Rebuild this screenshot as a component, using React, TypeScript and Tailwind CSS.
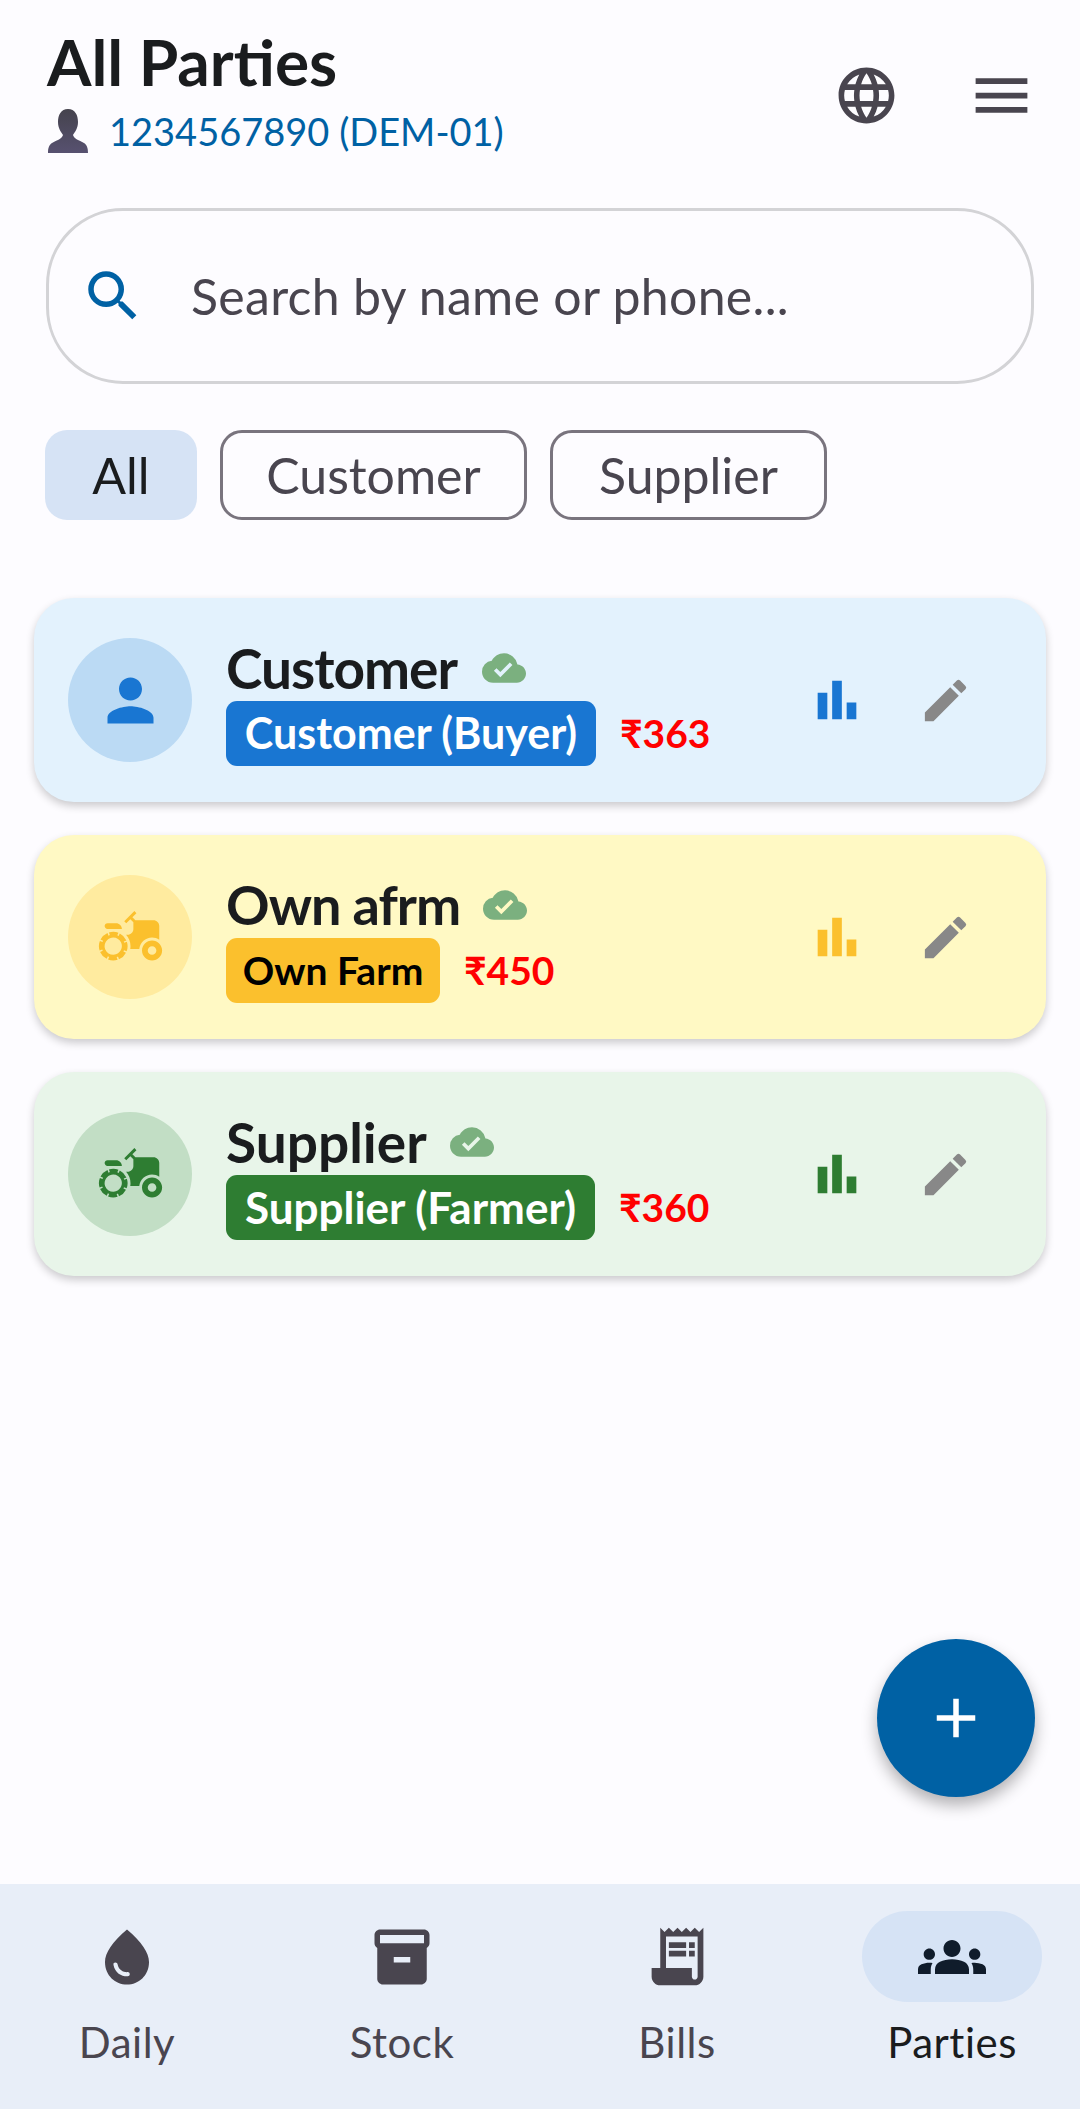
import {
  MdAdd, MdAgriculture, MdBarChart, MdCloudDone, MdEdit, MdGroups, MdInventory2,
  MdLanguage, MdMenu, MdPerson, MdReceiptLong, MdSearch, MdWaterDrop,
} from 'react-icons/md';

const parties = [
  {
    name: 'Customer', nameClass: 'text-[55px] tracking-[-1px]', cloudGap: 'ml-[25px]', badge: 'Customer (Buyer)', badgeClass: 'w-[370px] text-[43px]', amount: '₹363',
    card: 'bg-[#e3f2fd]', avatar: 'bg-[#bbdaf4]', tone: 'text-[#1976d2]', badgeBg: 'bg-[#1976d2] text-white', Icon: MdPerson,
  },
  {
    name: 'Own afrm', nameClass: 'text-[54px] tracking-[-1px]', cloudGap: 'ml-[23px]', badge: 'Own Farm', badgeClass: 'w-[214px] text-[39px]', amount: '₹450',
    card: 'bg-[#fff9c4]', avatar: 'bg-[#ffeb9f]', tone: 'text-[#fbc02d]', badgeBg: 'bg-[#fbc02d] text-black', Icon: MdAgriculture,
  },
  {
    name: 'Supplier', nameClass: 'text-[55px]', cloudGap: 'ml-[23px]', badge: 'Supplier (Farmer)', badgeClass: 'w-[369px] text-[44px]', amount: '₹360',
    card: 'bg-[#e8f5e9]', avatar: 'bg-[#c2dec5]', tone: 'text-[#2e7d32]', badgeBg: 'bg-[#2e7d32] text-white', Icon: MdAgriculture,
  },
];

const navItems = [
  { label: 'Daily', Icon: MdWaterDrop, size: 66 },
  { label: 'Stock', Icon: MdInventory2, size: 66 },
  { label: 'Bills', Icon: MdReceiptLong, size: 69 },
  { label: 'Parties', Icon: MdGroups, size: 68, active: true },
];

export default function App() {
  return (
    <div className="relative flex h-[2109px] w-[1080px] flex-col overflow-hidden bg-[#fdfcff] font-['Lato',sans-serif] text-[#1a1c1e]">
      <main className="flex-1">
        <header className="flex items-start justify-between pl-[47px] pr-[44px] pt-[30px]">
          <div>
            <h1 className="text-[64px] font-bold leading-[64px]">All Parties</h1>
            <div className="mt-[15px] flex items-center gap-[20px]">
              <svg width="42" height="44" viewBox="0 0 42 44" className="shrink-0">
                <defs>
                  <linearGradient id="bust" x1="0" y1="0" x2="0" y2="1">
                    <stop offset="0" stopColor="#45434d" />
                    <stop offset="1" stopColor="#575170" />
                  </linearGradient>
                </defs>
                <path d="M21 0c7 0 10 6 10 13 0 6-3 10-5 13 1 4 6 5 11 8 3 2 4 5 4 10H1c0-5 1-8 4-10 5-3 10-4 11-8-2-3-5-7-5-13C11 6 14 0 21 0z" fill="url(#bust)" />
              </svg>
              <span className="text-[38px] leading-[44px] text-[#0061a4]">1234567890 (DEM-01)</span>
            </div>
          </div>
          <div className="mt-[31px] flex items-center gap-[67px] text-[#49454f]">
            <MdLanguage size={67} />
            <MdMenu size={69} />
          </div>
        </header>

        <div className="mx-[46px] mt-[55px] flex h-[176px] items-center rounded-[77px] border-[3px] border-[#d3d3d6] pl-[31px]">
          <MdSearch size={66} className="shrink-0 text-[#0061a4]" />
          <span className="ml-[45px] text-[50px] tracking-[0.3px] text-[#49454f]">Search by name or phone...</span>
        </div>

        <div className="mx-[45px] mt-[46px] flex gap-[23px] text-[50px]">
          <div className="flex h-[90px] w-[152px] items-center justify-center rounded-[22px] bg-[#d6e3f5] text-[#1a1c1e]">All</div>
          <div className="flex h-[90px] w-[307px] items-center justify-center rounded-[22px] border-[3px] border-[#79747e] text-[#49454f]">Customer</div>
          <div className="flex h-[90px] w-[277px] items-center justify-center rounded-[22px] border-[3px] border-[#79747e] text-[#49454f]">Supplier</div>
        </div>

        <section className="mx-[34px] mt-[78px] flex flex-col gap-[33px]">
          {parties.map((p) => (
            <article key={p.name} className={`flex h-[204px] items-center rounded-[40px] pl-[34px] shadow-[0_4px_8px_rgba(0,0,0,0.2)] ${p.card}`}>
              <div className={`flex h-[124px] w-[124px] shrink-0 items-center justify-center rounded-full ${p.avatar} ${p.tone}`}>
                <p.Icon size={69} />
              </div>
              <div className="ml-[34px] w-[560px]">
                <div className="flex h-[66px] items-center">
                  <span className={`font-bold leading-[66px] ${p.nameClass}`}>{p.name}</span>
                  <MdCloudDone size={44} className={`${p.cloudGap} text-[#7bb07f]`} />
                </div>
                <div className="flex items-center">
                  <span className={`flex h-[65px] items-center justify-center rounded-[11px] font-bold ${p.badgeClass} ${p.badgeBg}`}>{p.badge}</span>
                  <span className="ml-[24px] text-[39px] font-bold text-[#ff0000]">{p.amount}</span>
                </div>
              </div>
              <div className="ml-[18px] flex w-[66px] justify-center">
                <MdBarChart size={58} className={p.tone} />
              </div>
              <div className="ml-[42px] flex w-[66px] justify-center">
                <MdEdit size={55} className="text-[#888888]" />
              </div>
            </article>
          ))}
        </section>
      </main>

      <button className="absolute left-[877px] top-[1639px] flex h-[158px] w-[158px] items-center justify-center rounded-full bg-[#0061a4] text-white shadow-[0_8px_16px_rgba(0,0,0,0.3)]">
        <MdAdd size={66} />
      </button>

      <nav className="flex h-[225px] gap-[95px] bg-[#e8eef8] pl-[37px]">
        {navItems.map(({ label, Icon, size, active }) => (
          <div key={label} className="flex w-[180px] shrink-0 flex-col items-center pt-[27px]">
            <div className={`flex h-[91px] w-[180px] items-center justify-center rounded-[46px] ${active ? 'bg-[#d6e3f5] text-[#101c2b]' : 'text-[#49454f]'}`}>
              <Icon size={size} />
            </div>
            <span className={`mt-[9px] text-[42px] tracking-[0.5px] ${active ? 'text-[#1a1c1e]' : 'text-[#49454f]'}`}>{label}</span>
          </div>
        ))}
      </nav>
    </div>
  );
}
